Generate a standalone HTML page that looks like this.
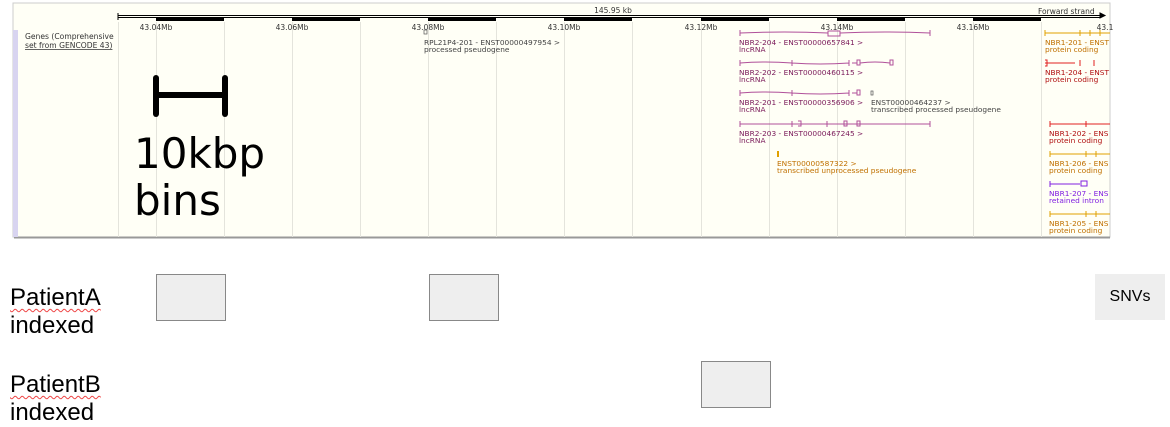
<!DOCTYPE html>
<html><head><style>
body{margin:0;background:#fff;width:1170px;height:422px;overflow:hidden;position:relative;font-family:"Liberation Sans",sans-serif}
.t{position:absolute;font-size:24px;line-height:28px;color:#000}
.sq{text-decoration:underline wavy #e44;text-decoration-thickness:1px;text-underline-offset:3px}
.box{position:absolute;width:68px;height:45px;background:#eee;border:1.5px solid #888}
</style></head><body>
<svg width="1170" height="422" style="position:absolute;left:0;top:0" font-family="DejaVu Sans, sans-serif">
<rect x="13" y="3" width="1097" height="234" fill="#fffff6" stroke="#ccc"/>
<line x1="14" y1="237.5" x2="1110" y2="237.5" stroke="#999" stroke-width="2"/>
<rect x="13" y="30" width="5" height="207" fill="#d8d4f0"/>
<g stroke="#e4e4dc" stroke-width="1">
<line x1="118.5" y1="22" x2="118.5" y2="237"/><line x1="156.5" y1="22" x2="156.5" y2="237"/><line x1="224.5" y1="22" x2="224.5" y2="237"/><line x1="292.5" y1="22" x2="292.5" y2="237"/><line x1="360.5" y1="22" x2="360.5" y2="237"/><line x1="428.5" y1="22" x2="428.5" y2="237"/><line x1="496.5" y1="22" x2="496.5" y2="237"/><line x1="564.5" y1="22" x2="564.5" y2="237"/><line x1="632.5" y1="22" x2="632.5" y2="237"/><line x1="701.5" y1="22" x2="701.5" y2="237"/><line x1="769.5" y1="22" x2="769.5" y2="237"/><line x1="837.5" y1="22" x2="837.5" y2="237"/><line x1="905.5" y1="22" x2="905.5" y2="237"/><line x1="973.5" y1="22" x2="973.5" y2="237"/><line x1="1041.5" y1="22" x2="1041.5" y2="237"/>
</g>
<line x1="118" y1="15.5" x2="1100" y2="15.5" stroke="#000"/>
<line x1="118" y1="17.5" x2="1100" y2="17.5" stroke="#000"/>
<line x1="118" y1="13" x2="118" y2="20" stroke="#000"/>
<g fill="#000"><rect x="156" y="18" width="68" height="3"/><rect x="292" y="18" width="68" height="3"/><rect x="428" y="18" width="68" height="3"/><rect x="564" y="18" width="68" height="3"/><rect x="701" y="18" width="68" height="3"/><rect x="837" y="18" width="68" height="3"/><rect x="973" y="18" width="68" height="3"/></g>
<rect x="590" y="7" width="46" height="8" fill="#fffff6"/>
<text x="613" y="13" font-size="7.5" text-anchor="middle" fill="#333">145.95 kb</text>
<rect x="1036" y="7" width="60" height="8" fill="#fffff6"/>
<text x="1038" y="14" font-size="7.5" fill="#333">Forward strand</text>
<path d="M1094 15.5h6M1100 13l5 2.5-5 2.5z" stroke="#000" fill="#000"/>
<g font-size="7.5" fill="#333" text-anchor="middle"><text x="156" y="30">43.04Mb</text><text x="292" y="30">43.06Mb</text><text x="428" y="30">43.08Mb</text><text x="564" y="30">43.10Mb</text><text x="701" y="30">43.12Mb</text><text x="837" y="30">43.14Mb</text><text x="973" y="30">43.16Mb</text><text x="1105" y="30">43.1</text></g>
<text x="25" y="39" font-size="7.6" fill="#333">Genes (Comprehensive</text>
<text x="25" y="48" font-size="7.6" fill="#333" text-decoration="underline">set from GENCODE 43)</text>
<rect x="424" y="30" width="3" height="4" fill="none" stroke="#555" stroke-width=".7"/>
<text x="424" y="45" font-size="7.4" fill="#444">RPL21P4-201 - ENST00000497954 &gt;</text>
<text x="424" y="52" font-size="7.4" fill="#444">processed pseudogene</text>
<g stroke="#b0509a" fill="none" stroke-width="1">
<path d="M740 30v6M740 33q45-2 88 0M828 31h12v5h-12zM840 33q45-2 90 0M930 30v6"/>
<path d="M740 60v6M740 63q25-2 52 0q28 2 57 0M792 60v6M849 60v6M852 63h5M857 60h3v5h-3zM860 63q15-2 30 0M890 60h3v5h-3z"/>
<path d="M740 90v6M740 93q25-2 52 0q28 2 57 0M792 90v6M849 90v6M852 93h5M857 90h3v5h-3z"/>
<path d="M740 124h190M740 121v6M792 121v6M798 121h3v5h-3M827 121v6M844 121h3v5h-3zM857 121h3v5h-3zM930 121v6"/>
</g>
<g font-size="7.4" fill="#7a1a5a">
<text x="739" y="45">NBR2-204 - ENST00000657841 &gt;</text><text x="739" y="52">lncRNA</text>
<text x="739" y="75">NBR2-202 - ENST00000460115 &gt;</text><text x="739" y="82">lncRNA</text>
<text x="739" y="105">NBR2-201 - ENST00000356906 &gt;</text><text x="739" y="112">lncRNA</text>
<text x="739" y="136">NBR2-203 - ENST00000467245 &gt;</text><text x="739" y="143">lncRNA</text>
</g>
<rect x="871" y="91" width="2" height="4" fill="none" stroke="#555" stroke-width=".7"/>
<text x="871" y="105" font-size="7.4" fill="#444">ENST00000464237 &gt;</text>
<text x="871" y="112" font-size="7.4" fill="#444">transcribed processed pseudogene</text>
<rect x="777" y="151" width="2" height="6" fill="#e0a000"/>
<text x="777" y="166" font-size="7.4" fill="#c07000">ENST00000587322 &gt;</text>
<text x="777" y="173" font-size="7.4" fill="#c07000">transcribed unprocessed pseudogene</text>
<g fill="none" stroke-width="1">
<path d="M1045 33h65M1045 30v6M1080 30v6M1090 30v6M1100 30v6" stroke="#e0a000"/>
<path d="M1045 63h30M1045 60h2v6h-2M1080 60v6M1094 60v6" stroke="#e02020"/>
<path d="M1050 124h60M1050 121v6M1086 121v6" stroke="#e02020"/>
<path d="M1050 154h60M1050 151v6M1086 151v6M1096 151v6" stroke="#e0a000"/>
<path d="M1050 184h30M1050 181v6M1081 181h6v5h-6z" stroke="#8020e0"/>
<path d="M1050 214h60M1050 211v6M1086 211v6M1096 211v6" stroke="#e0a000"/>
</g>
<g font-size="7.4">
<text x="1045" y="45" fill="#c07000">NBR1-201 - ENST</text><text x="1045" y="52" fill="#c07000">protein coding</text>
<text x="1045" y="75" fill="#b01010">NBR1-204 - ENST</text><text x="1045" y="82" fill="#b01010">protein coding</text>
<text x="1049" y="136" fill="#b01010">NBR1-202 - ENS</text><text x="1049" y="143" fill="#b01010">protein coding</text>
<text x="1049" y="166" fill="#c07000">NBR1-206 - ENS</text><text x="1049" y="173" fill="#c07000">protein coding</text>
<text x="1049" y="196" fill="#8020e0">NBR1-207 - ENS</text><text x="1049" y="203" fill="#8020e0">retained intron</text>
<text x="1049" y="226" fill="#c07000">NBR1-205 - ENS</text><text x="1049" y="233" fill="#c07000">protein coding</text>
</g>
<g stroke="#000" stroke-width="6" stroke-linecap="round"><line x1="156" y1="95" x2="225" y2="95"/><line x1="156" y1="78" x2="156" y2="114"/><line x1="225" y1="78" x2="225" y2="114"/></g>
<text x="134" y="168" font-family="DejaVu Sans, sans-serif" font-size="42" fill="#000">10kbp</text>
<text x="134" y="215" font-family="DejaVu Sans, sans-serif" font-size="42" fill="#000">bins</text>
</svg>
<div class="t" style="left:10px;top:284px"><span class="sq">PatientA</span><br>indexed</div>
<div class="t" style="left:10px;top:371px"><span class="sq">PatientB</span><br>indexed</div>
<div class="box" style="left:156px;top:274px"></div>
<div class="box" style="left:429px;top:274px"></div>
<div class="box" style="left:701px;top:361px"></div>
<div style="position:absolute;left:1095px;top:274px;width:70px;height:46px;background:#eee;font-size:16px;line-height:46px;text-align:center">SNVs</div>
</body></html>
